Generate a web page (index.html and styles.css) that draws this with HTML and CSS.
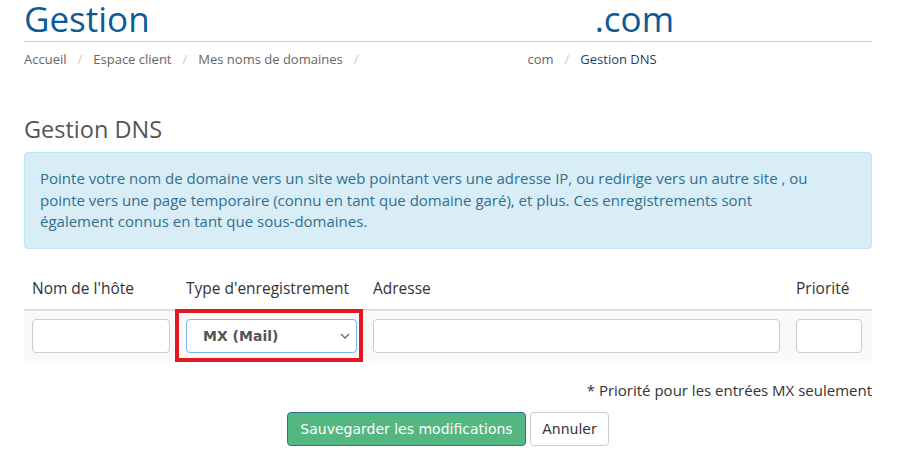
FILE: index.html
```html
<!DOCTYPE html>
<html lang="fr">
<head>
  <meta charset="UTF-8">
  <title>Gestion DNS</title>
  <link rel="stylesheet" href="styles.css">
</head>
<body>
  <div class="page">
    <h1 class="page-title">Gestion<span class="masked masked-title"></span>.com</h1>
    <ol class="breadcrumb">
      <li><a href="#">Accueil</a></li>
      <li><a href="#">Espace client</a></li>
      <li><a href="#">Mes noms de domaines</a></li>
      <li><a href="#"><span class="masked masked-crumb"></span>com</a></li>
      <li class="active">Gestion DNS</li>
    </ol>

    <h3 class="section-title">Gestion DNS</h3>
    <div class="alert-info">
      Pointe votre nom de domaine vers un site web pointant vers une adresse IP, ou redirige vers un autre site , ou<br>
      pointe vers une page temporaire (connu en tant que domaine garé), et plus. Ces enregistrements sont<br>
      également connus en tant que sous-domaines.
    </div>

    <table class="dns-table">
      <colgroup>
        <col class="col-host">
        <col class="col-type">
        <col class="col-addr">
        <col class="col-prio">
      </colgroup>
      <thead>
        <tr>
          <th>Nom de l'hôte</th>
          <th>Type d'enregistrement</th>
          <th>Adresse</th>
          <th>Priorité</th>
        </tr>
      </thead>
      <tbody>
        <tr>
          <td><input class="form-control" type="text"></td>
          <td class="highlight">
            <div class="select-box">
              <span>MX (Mail)</span>
              <svg width="10" height="6" viewBox="0 0 10 6"><path d="M1 1l4 4 4-4" fill="none" stroke="#666" stroke-width="1.3"/></svg>
            </div>
          </td>
          <td><input class="form-control" type="text"></td>
          <td><input class="form-control prio" type="text"></td>
        </tr>
      </tbody>
    </table>

    <p class="note">* Priorité pour les entrées MX seulement</p>

    <div class="actions">
      <button class="btn btn-save">Sauvegarder les modifications</button>
      <button class="btn btn-cancel">Annuler</button>
    </div>
  </div>
</body>
</html>
```

FILE: styles.css
```css
body {
  margin: 0;
  background: #fff;
  color: #333;
  font-family: "Open Sans", sans-serif;
  font-size: 15px;
}
.page {
  width: 848px;
  margin: 0 0 0 24px;
}
.page-title {
  margin: 0;
  height: 42px;
  line-height: 37px;
  font-size: 35px;
  font-weight: 400;
  color: #0c5b97;
  border-bottom: 1px solid #ccc;
  box-sizing: border-box;
}
.masked {
  display: inline-block;
}
.masked-title { width: 445px; }
.masked-crumb { width: 158px; }

.breadcrumb {
  list-style: none;
  margin: 0;
  padding: 8px 0 0;
  height: 34px;
  box-sizing: border-box;
  display: flex;
  font-size: 13px;
}
.breadcrumb li + li::before {
  content: "/";
  color: #ccc;
  padding: 0 11px;
}
.breadcrumb a {
  color: #666;
  text-decoration: none;
}
.breadcrumb .active { color: #1d3e72; }

.section-title {
  margin: 37px 0 0;
  height: 39px;
  font-size: 23.5px;
  font-weight: 400;
  color: #555;
}
.alert-info {
  background: #d9edf7;
  border: 1px solid #bce8f1;
  border-radius: 4px;
  color: #31708f;
  padding: 15px 15px 16px;
  height: 97px;
  box-sizing: border-box;
  line-height: 21.5px;
  font-size: 15px;
}

.dns-table {
  margin-top: 22px;
  width: 848px;
  table-layout: fixed;
  border-collapse: collapse;
}
.col-host { width: 154px; }
.col-type { width: 187px; }
.col-addr { width: 423px; }
.col-prio { width: 84px; }
.dns-table th {
  text-align: left;
  font-weight: 400;
  font-size: 15.5px;
  padding: 7px 8px 10px;
  line-height: 21px;
  border-bottom: 2px solid #ddd;
}
.dns-table td {
  background: #f9f9f9;
  padding: 8px;
  height: 34px;
}
.form-control {
  display: block;
  width: 100%;
  height: 34px;
  box-sizing: border-box;
  border: 1px solid #ccc;
  border-radius: 4px;
  background: #fff;
  margin: 0;
}
.form-control.prio { width: 66px; }
.highlight { position: relative; }
.highlight::after {
  content: "";
  position: absolute;
  left: -3px;
  right: 2px;
  top: -2px;
  bottom: -1px;
  border: 4px solid #e5161f;
}
.select-box {
  height: 34px;
  box-sizing: border-box;
  border: 1px solid #7fb7e6;
  border-radius: 4px;
  background: #fff;
  display: flex;
  align-items: center;
  justify-content: space-between;
  padding: 0 6px 0 16px;
  font-family: "DejaVu Sans", sans-serif;
  font-weight: 700;
  font-size: 14px;
  color: #555;
}

.note {
  margin: 19px 0 0;
  text-align: right;
  line-height: 20px;
}
.actions {
  margin-top: 12px;
  display: flex;
  justify-content: center;
  gap: 4px;
}
.btn {
  height: 34px;
  box-sizing: border-box;
  border-radius: 4px;
  font-family: "DejaVu Sans", sans-serif;
  font-size: 14px;
  padding: 0 10px;
  cursor: pointer;
}
.btn-save {
  background: #54b680;
  border: 1px solid #2f6e9e;
  color: #fff;
  width: 239px;
}
.btn-cancel {
  background: #fff;
  border: 1px solid #ccc;
  color: #333;
  width: 79px;
}
```
